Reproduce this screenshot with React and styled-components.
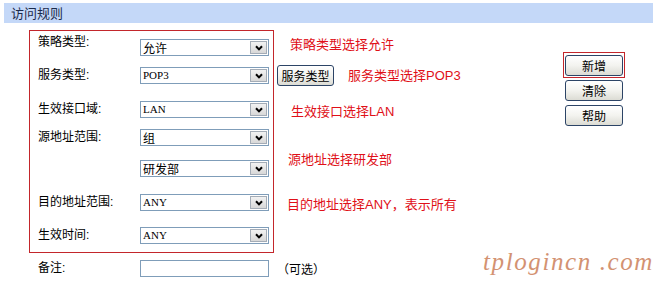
import React from "react";
import styled, { createGlobalStyle } from "styled-components";

const GlobalStyle = createGlobalStyle`
  body {
    margin: 0;
    background: #fff;
    font-family: "Liberation Sans", "Noto Sans CJK SC", sans-serif;
  }
`;

const rows = [
  { label: "策略类型:", value: "允许", top: 0, labelUp: true },
  { label: "服务类型:", value: "POP3", latin: true, top: 11 },
  { label: "生效接口域:", value: "LAN", latin: true, top: 17 },
  { label: "源地址范围:", value: "组", top: 11 },
  { label: "", value: "研发部", top: 14 },
  { label: "目的地址范围:", value: "ANY", latin: true, top: 17 },
  { label: "生效时间:", value: "ANY", latin: true, top: 16 },
];

const Chevron = () => (
  <svg width="8" height="6" viewBox="0 0 8 6">
    <path d="M1 1.2 L4 4.4 L7 1.2" fill="none" stroke="#000" strokeWidth="2" />
  </svg>
);

const FakeSelect = ({ value, latin }) => (
  <SelectBox>
    <SelectText $latin={latin}>{value}</SelectText>
    <ArrowBox>
      <Chevron />
    </ArrowBox>
  </SelectBox>
);

const App = () => {
  return (
    <Page>
      <GlobalStyle />
      <Header>访问规则</Header>
      <Main>
        <FormArea>
          <Top>
            <HighlightBox>
              {rows.map((r, i) => (
                <Row key={i} $top={r.top}>
                  <Label $up={r.labelUp}>{r.label}</Label>
                  <FakeSelect value={r.value} latin={r.latin} />
                </Row>
              ))}
            </HighlightBox>
            <Notes>
              <Note $top={6} $left={16}>策略类型选择允许</Note>
              <NoteRow>
                <XpButton $w={57}>服务类型</XpButton>
                <Note $left={14}>服务类型选择POP3</Note>
              </NoteRow>
              <Note $top={17} $left={17}>生效接口选择LAN</Note>
              <Note $top={31} $left={14}>源地址选择研发部</Note>
              <Note $top={28} $left={13}>目的地址选择ANY，表示所有</Note>
            </Notes>
          </Top>
          <RemarkRow>
            <Label>备注:</Label>
            <TextInput />
            <Hint>（可选）</Hint>
          </RemarkRow>
        </FormArea>
        <Actions>
          <Marked>
            <XpButton $w={58}>新增</XpButton>
          </Marked>
          <XpButton $w={58} $top={2} $left={2}>清除</XpButton>
          <XpButton $w={58} $top={4} $left={2}>帮助</XpButton>
        </Actions>
      </Main>
      <Watermark>tplogincn .com</Watermark>
    </Page>
  );
};

export default App;

const Page = styled.div`
  position: relative;
  width: 657px;
  height: 286px;
  overflow: hidden;
`;

const Header = styled.div`
  margin: 3px 4px 0 4px;
  height: 20px;
  padding-left: 7px;
  background: #c4d8f8;
  color: #1b2b4b;
  font-size: 13px;
  line-height: 20px;
  font-family: "Noto Sans CJK SC", sans-serif;
`;

const Main = styled.div`
  display: flex;
  margin-top: 7px;
  padding: 0 32px 0 29px;
`;

const FormArea = styled.div`
  display: flex;
  flex-direction: column;
`;

const Top = styled.div`
  display: flex;
`;

const HighlightBox = styled.div`
  box-sizing: border-box;
  width: 245px;
  border: 1px solid #c3262b;
  padding: 8px 0 8px 8px;
`;

const Row = styled.div`
  display: grid;
  grid-template-columns: 102px 129px;
  align-items: center;
  height: 17px;
  margin-top: ${(p) => p.$top}px;
`;

const Label = styled.span`
  font-size: 12px;
  line-height: 17px;
  color: #000;
  white-space: nowrap;
  position: relative;
  top: ${(p) => (p.$up ? -5 : 0)}px;
`;

const SelectBox = styled.div`
  box-sizing: border-box;
  display: flex;
  align-items: center;
  width: 129px;
  height: 17px;
  border: 1px solid #7f9db9;
  background: #fff;
`;

const SelectText = styled.span`
  flex: 1;
  padding-left: 2px;
  color: #000;
  font-family: ${(p) =>
    p.$latin
      ? '"Liberation Serif", serif'
      : '"Noto Sans CJK SC", sans-serif'};
  font-size: ${(p) => (p.$latin ? 11 : 12)}px;
  line-height: 15px;
  white-space: nowrap;
`;

const ArrowBox = styled.span`
  box-sizing: border-box;
  display: flex;
  align-items: center;
  justify-content: center;
  width: 17px;
  height: 13px;
  margin-right: 1px;
  border: 1px solid #a4acb6;
  background: linear-gradient(#f2f2f2, #d8d8d8);
`;

const Notes = styled.div`
  display: flex;
  flex-direction: column;
  width: 289px;
`;

const Note = styled.span`
  margin-top: ${(p) => p.$top || 0}px;
  padding-left: ${(p) => p.$left || 0}px;
  color: #e01018;
  font-size: 13px;
  line-height: 17px;
  white-space: nowrap;
`;

const NoteRow = styled.div`
  display: flex;
  align-items: center;
  margin-top: 12px;
  padding-left: 3px;
`;

const XpButton = styled.button`
  box-sizing: border-box;
  width: ${(p) => p.$w}px;
  height: 21px;
  margin: ${(p) => p.$top || 0}px 0 0 ${(p) => p.$left || 0}px;
  padding: 0;
  border: 1px solid #2c4466;
  border-radius: 3px;
  background: linear-gradient(#ffffff 0%, #f3f3ef 50%, #dcdcd4 100%);
  color: #000;
  font-family: "Noto Sans CJK SC", sans-serif;
  font-size: 12px;
  line-height: 19px;
`;

const Actions = styled.div`
  display: flex;
  flex-direction: column;
  margin-top: 22px;
`;

const Marked = styled.div`
  display: flex;
  width: 62px;
  box-sizing: border-box;
  border: 1px solid #c3262b;
  padding: 2px 1px 1px 1px;
`;

const RemarkRow = styled.div`
  display: grid;
  grid-template-columns: 102px 129px auto;
  align-items: center;
  margin-top: 7px;
  padding-left: 9px;
`;

const TextInput = styled.div`
  box-sizing: border-box;
  width: 129px;
  height: 17px;
  border: 1px solid #7f9db9;
  background: #fff;
`;

const Hint = styled.span`
  padding-left: 8px;
  font-size: 12px;
  color: #000;
  white-space: nowrap;
`;

const Watermark = styled.div`
  position: absolute;
  left: 483px;
  top: 248px;
  color: #d39272;
  font-family: "Liberation Serif", serif;
  font-style: italic;
  font-size: 25px;
  letter-spacing: 1.6px;
  white-space: nowrap;
`;
